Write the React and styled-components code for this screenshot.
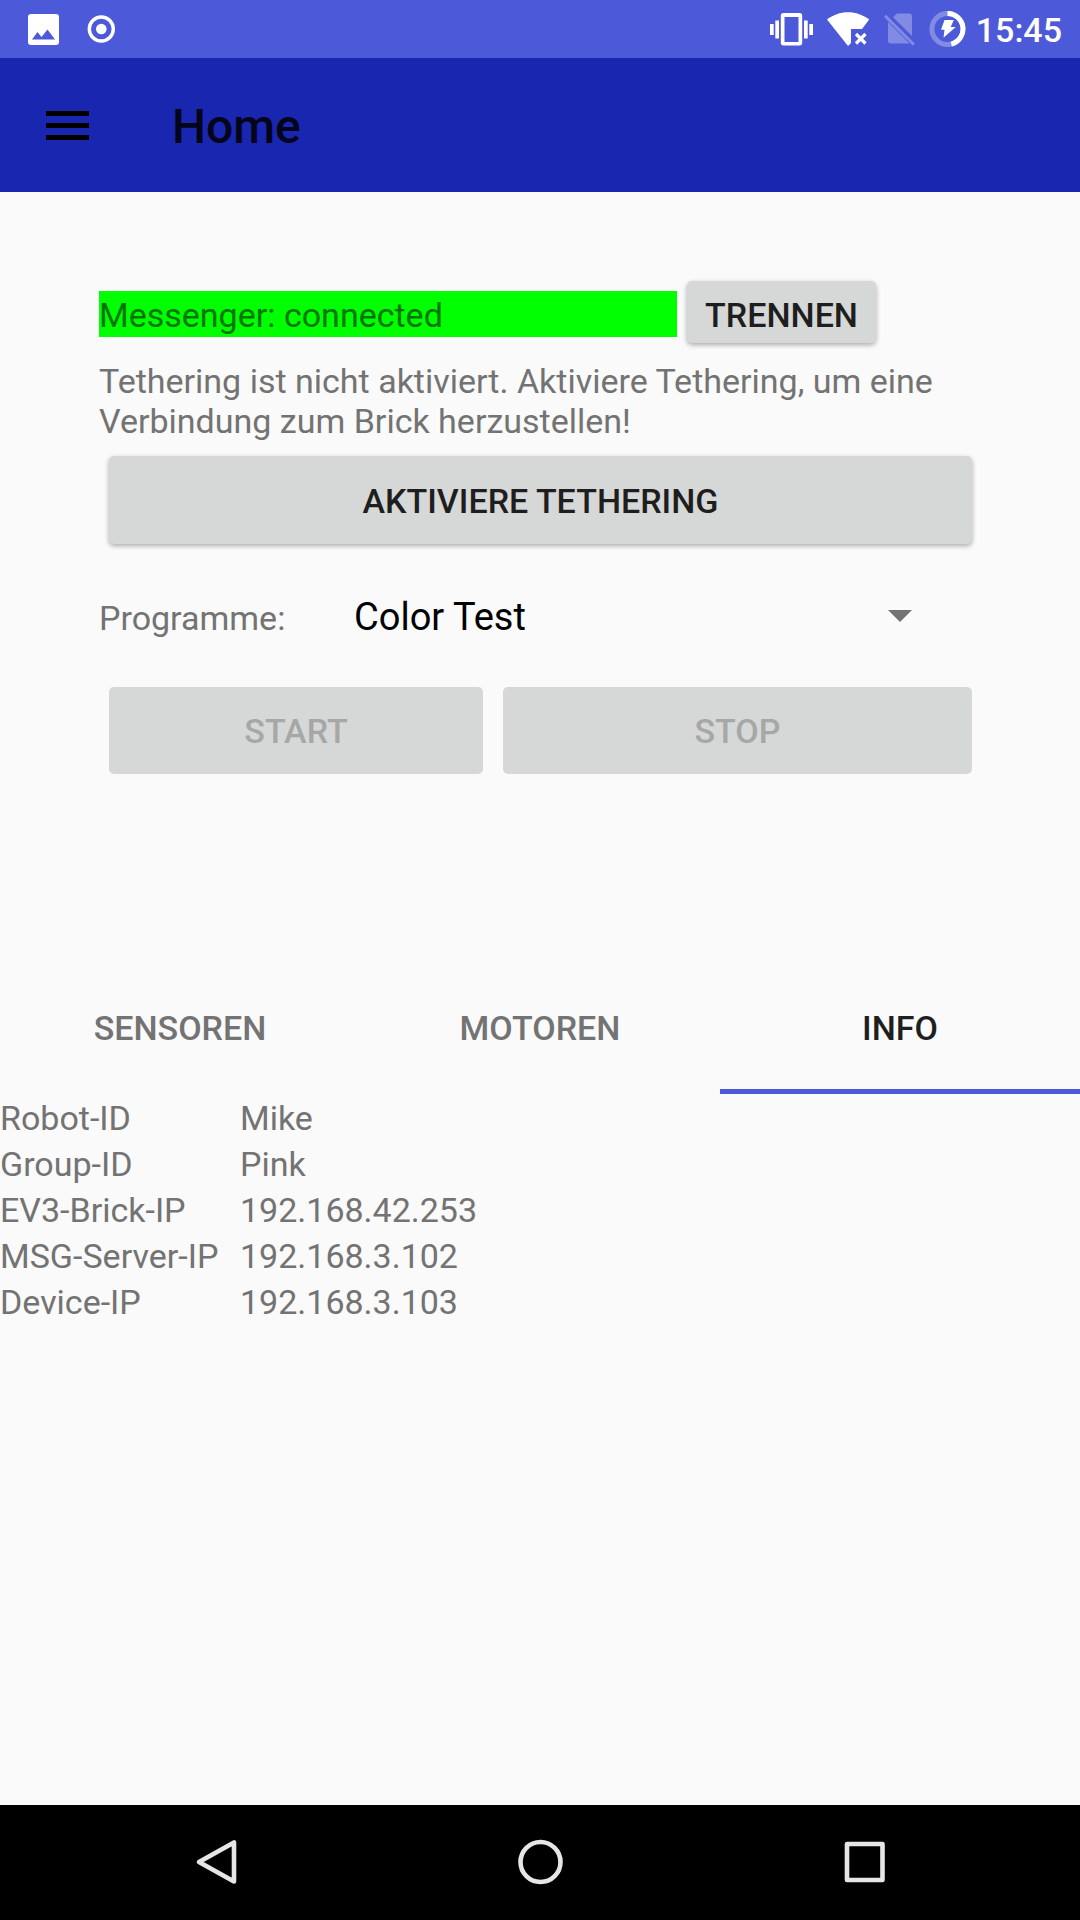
import React, { useState } from "react";
import styled, { createGlobalStyle } from "styled-components";

const GlobalStyle = createGlobalStyle`
  * { box-sizing: border-box; }
  body {
    margin: 0;
    background: #fafafa;
    font-family: Roboto, "Liberation Sans", sans-serif;
    font-size: 34px;
    line-height: 40px;
    color: #737373;
  }
  button, select { font-family: inherit; }
`;

const Screen = styled.div`
  display: flex;
  flex-direction: column;
  min-height: 100vh;
`;

const StatusBar = styled.div`
  display: flex;
  align-items: center;
  justify-content: space-between;
  height: 58px;
  padding: 0 18px 0 28px;
  background: #4c5ad9;
  color: #fff;
`;

const StatusGroup = styled.div`
  display: flex;
  align-items: center;
  gap: ${(p) => p.$gap}px;
  svg { display: block; }
`;

const Clock = styled.time`
  font-weight: 500;
  padding-top: 2px;
  margin-left: -4px;
`;

const Toolbar = styled.header`
  display: flex;
  align-items: center;
  gap: 83px;
  height: 134px;
  padding: 0 46px;
  background: #1926af;
`;

const IconButton = styled.button`
  display: flex;
  padding: 0;
  border: 0;
  background: none;
  cursor: pointer;
`;

const Title = styled.h1`
  margin: 0;
  padding-top: 3px;
  font-size: 48px;
  line-height: 56px;
  font-weight: 500;
  color: #04051a;
`;

const Main = styled.main`
  flex: 1;
`;

const Controls = styled.section`
  display: flex;
  flex-direction: column;
  padding: 89px 98px 0 99px;
`;

const MessengerRow = styled.div`
  display: flex;
  align-items: baseline;
  gap: 10px;
  padding-right: 106px;
`;

const MessengerStatus = styled.div`
  flex: 1;
  padding-top: 2px;
  line-height: 44px;
  background: #00ff00;
  color: #007500;
`;

const Hint = styled.p`
  margin: 18px 0 15px;
`;

const RaisedButton = styled.button`
  flex: ${(p) => p.$grow || "none"};
  height: ${(p) => (p.$compact ? 62 : 88)}px;
  padding: ${(p) => (p.$compact ? "6px 18px 0" : "2px 18px 0")};
  border: 0;
  border-radius: 5px;
  background: #d6d8d7;
  color: #1e1e1e;
  font-size: 34px;
  line-height: 40px;
  font-weight: 500;
  text-transform: uppercase;
  box-shadow: 0 2px 5px rgba(0, 0, 0, 0.32);
  cursor: pointer;
  &:disabled {
    height: 87px;
    padding-top: 0;
    color: #a6a8a7;
    box-shadow: none;
    cursor: default;
  }
`;

const ButtonRow = styled.div`
  display: flex;
  gap: 20px;
  padding: 0 10px;
`;

const ProgramRow = styled.div`
  display: flex;
  align-items: center;
  height: 143px;
`;

const ProgramLabel = styled.label`
  width: 245px;
  padding-top: 4px;
`;

const Spinner = styled.div`
  position: relative;
  flex: 1;
  margin-right: 46px;
`;

const SpinnerSelect = styled.select`
  appearance: none;
  display: block;
  width: 100%;
  height: 58px;
  padding: 2px 60px 0 10px;
  border: 0;
  background: none;
  color: #000;
  font-size: 38px;
  line-height: 46px;
`;

const SpinnerArrow = styled.svg`
  position: absolute;
  right: 24px;
  top: 23px;
  pointer-events: none;
`;

const Tabs = styled.div`
  display: flex;
  margin-top: 194px;
`;

const Tab = styled.button`
  flex: 1;
  height: 126px;
  padding: 0 0 2px;
  border: 0;
  border-bottom: 5px solid ${(p) => (p.$active ? "#4c5ad9" : "transparent")};
  background: none;
  color: ${(p) => (p.$active ? "#1f1f1f" : "#737373")};
  font-size: 34px;
  line-height: 40px;
  font-weight: 500;
  text-transform: uppercase;
  cursor: pointer;
`;

const InfoTable = styled.table`
  margin-top: 1px;
  border-collapse: collapse;
  line-height: 46px;
  th, td {
    padding: 0;
    font-weight: 400;
    text-align: left;
  }
  th { width: 240px; }
`;

const NavBar = styled.nav`
  display: flex;
  align-items: center;
  justify-content: center;
  gap: 276px;
  height: 115px;
  background: #000;
`;

const ImageIcon = () => (
  <svg width="31" height="31" viewBox="0 0 31 31" aria-hidden="true">
    <path
      fill="#fff"
      fillRule="evenodd"
      d="M3 0h25a3 3 0 0 1 3 3v25a3 3 0 0 1-3 3H3a3 3 0 0 1-3-3V3a3 3 0 0 1 3-3zM4 25.500h23L19.500 15.500l-6 7.500-4-5z"
    />
  </svg>
);

const RecordIcon = () => (
  <svg width="28" height="30" viewBox="0 0 28 30" aria-hidden="true">
    <circle cx="14.300" cy="15" r="12" fill="none" stroke="#fff" strokeWidth="3.400" />
    <circle cx="14.300" cy="15" r="5.300" fill="#fff" />
  </svg>
);

const VibrateIcon = () => (
  <svg width="43" height="34" viewBox="0 0 43 34" fill="#fff" aria-hidden="true">
    <path
      fillRule="evenodd"
      d="M13.500 1h16a2.700 2.700 0 0 1 2.700 2.700v27a2.700 2.700 0 0 1-2.700 2.700h-16a2.700 2.700 0 0 1-2.700-2.700v-27a2.700 2.700 0 0 1 2.700-2.700zM14.500 5v25h14V5z"
    />
    <path d="M0 12h3.700v11H0zM5.300 8.500H9v18H5.300zM34 8.500h3.700v18H34zM39.300 12H43v11h-3.700z" />
  </svg>
);

const WifiIcon = () => (
  <svg width="43" height="34" viewBox="0 0 43 34" aria-hidden="true">
    <path
      fill="#fff"
      d="M0 7.500C6 3 13 0.300 21 0.300S36 3 42.200 7.500L35 17H24v14l-3 3z"
    />
    <path d="M29 22l9.500 9.500M38.500 22L29 31.500" stroke="#fff" strokeWidth="3.200" />
  </svg>
);

const NoSimIcon = () => (
  <svg width="31" height="34" viewBox="0 0 31 34" fill="#fff" fillOpacity="0.3" aria-hidden="true">
    <path d="M13 1.500h12a3 3 0 0 1 3 3V24L9 5.200z" />
    <path d="M4 10L25.500 31.500H7a3 3 0 0 1-3-3z" />
    <path d="M0 4.900L2.100 2.800 31 31.700 28.900 33.800z" />
  </svg>
);

const BatteryIcon = () => (
  <svg width="37" height="37" viewBox="0 0 37 37" aria-hidden="true">
    <g fill="none" strokeWidth="5">
      <circle cx="18.500" cy="18" r="15.600" stroke="#fff" strokeOpacity="0.3" />
      <path d="M18.500 2.400a15.600 15.600 0 0 1 3.800 30.700" stroke="#fff" />
    </g>
    <path fill="#fff" d="M15.500 9h9.300L21.700 16h5L14.500 26.800l1-8h-3.500z" />
  </svg>
);

const INFO = [
  ["Robot-ID", "Mike"],
  ["Group-ID", "Pink"],
  ["EV3-Brick-IP", "192.168.42.253"],
  ["MSG-Server-IP", "192.168.3.102"],
  ["Device-IP", "192.168.3.103"],
];

const TABS = ["Sensoren", "Motoren", "Info"];

export default function App() {
  const [tab, setTab] = useState("Info");

  return (
    <Screen>
      <GlobalStyle />
      <StatusBar>
        <StatusGroup $gap={28}>
          <ImageIcon />
          <RecordIcon />
        </StatusGroup>
        <StatusGroup $gap={14}>
          <VibrateIcon />
          <WifiIcon />
          <NoSimIcon />
          <BatteryIcon />
          <Clock>15:45</Clock>
        </StatusGroup>
      </StatusBar>

      <Toolbar>
        <IconButton type="button" aria-label="Menu">
          <svg width="43" height="29" viewBox="0 0 43 29">
            <path d="M0 0h43v5H0zM0 12h43v5H0zM0 24h43v5H0z" />
          </svg>
        </IconButton>
        <Title>Home</Title>
      </Toolbar>

      <Main>
        <Controls>
          <MessengerRow>
            <MessengerStatus>Messenger: connected</MessengerStatus>
            <RaisedButton type="button" $compact>Trennen</RaisedButton>
          </MessengerRow>
          <Hint>
            Tethering ist nicht aktiviert. Aktiviere Tethering, um eine
            Verbindung zum Brick herzustellen!
          </Hint>
          <ButtonRow>
            <RaisedButton type="button" $grow="1">Aktiviere Tethering</RaisedButton>
          </ButtonRow>
          <ProgramRow>
            <ProgramLabel htmlFor="program">Programme:</ProgramLabel>
            <Spinner>
              <SpinnerSelect id="program" defaultValue="Color Test">
                <option>Color Test</option>
              </SpinnerSelect>
              <SpinnerArrow width="24" height="12" viewBox="0 0 24 12" aria-hidden="true">
                <path d="M0 0h24L12 12z" fill="#737373" />
              </SpinnerArrow>
            </Spinner>
          </ProgramRow>
          <ButtonRow>
            <RaisedButton type="button" $grow="338 1 0" disabled>Start</RaisedButton>
            <RaisedButton type="button" $grow="433 1 0" disabled>Stop</RaisedButton>
          </ButtonRow>
        </Controls>

        <Tabs role="tablist">
          {TABS.map((name) => (
            <Tab
              key={name}
              type="button"
              role="tab"
              aria-selected={tab === name}
              $active={tab === name}
              onClick={() => setTab(name)}
            >
              {name}
            </Tab>
          ))}
        </Tabs>
        {tab === "Info" && (
          <InfoTable>
            <tbody>
              {INFO.map(([label, value]) => (
                <tr key={label}>
                  <th scope="row">{label}</th>
                  <td>{value}</td>
                </tr>
              ))}
            </tbody>
          </InfoTable>
        )}
      </Main>

      <NavBar>
        <IconButton type="button" aria-label="Back">
          <svg width="48" height="48" viewBox="0 0 48 48" fill="none" stroke="#e6e6e6" strokeWidth="4.600" strokeLinejoin="round">
            <path d="M42 3.500v39L7 23z" />
          </svg>
        </IconButton>
        <IconButton type="button" aria-label="Home">
          <svg width="48" height="48" viewBox="0 0 48 48" fill="none" stroke="#e6e6e6" strokeWidth="4.600">
            <circle cx="24.500" cy="23" r="20" />
          </svg>
        </IconButton>
        <IconButton type="button" aria-label="Recent apps">
          <svg width="48" height="48" viewBox="0 0 48 48" fill="none" stroke="#e6e6e6" strokeWidth="4.600" strokeLinejoin="round">
            <path d="M7 5h35.500v36H7z" />
          </svg>
        </IconButton>
      </NavBar>
    </Screen>
  );
}
